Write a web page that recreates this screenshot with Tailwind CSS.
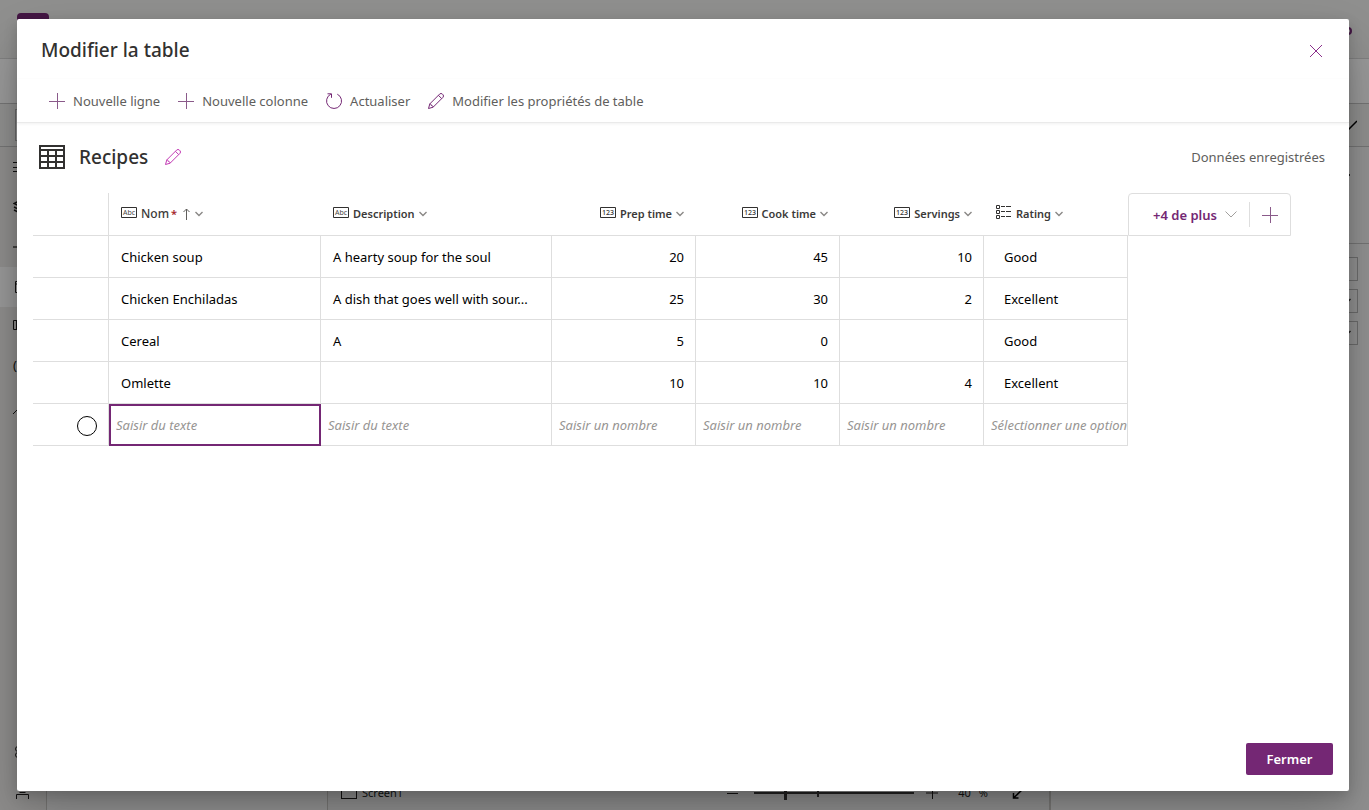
<!DOCTYPE html>
<html lang="fr">
<head>
<meta charset="utf-8">
<meta name="viewport" content="width=device-width, initial-scale=1">
<title>Modifier la table</title>
<script src="https://cdn.jsdelivr.net/npm/@tailwindcss/browser@4"></script>
</head>
<body class="relative h-screen overflow-hidden bg-white font-['Segoe_UI','Noto_Sans','Open_Sans',sans-serif] text-[13px] leading-5 text-[#323130]">

<svg class="hidden" aria-hidden="true">
  <symbol id="plus" viewBox="0 0 16 16"><path d="M8.5 0v16M0 8.5h16" fill="none" stroke="currentColor"/></symbol>
  <symbol id="chev" viewBox="0 0 8 6"><path d="M.5 1l3.5 3.5L7.500 1" fill="none" stroke="currentColor" stroke-width="1.400"/></symbol>
  <symbol id="pencil" viewBox="0 0 16 16"><path d="M.5 15.500l1.300-4.600L11.600 1.100a2 2 0 0 1 2.800 0l.5.500a2 2 0 0 1 0 2.800L5.100 14.200zM10.400 2.300l3.300 3.300M1.800 10.900c1 0 1.500.5 1.500 1.600 1.200 0 1.800.6 1.800 1.700" fill="none" stroke="currentColor"/></symbol>
  <symbol id="abc" viewBox="0 0 16 11"><path d="M.5.5h15v10H.5z" fill="none" stroke="#323130"/><text x="8" y="8" font-size="7" font-weight="400" text-anchor="middle" fill="#484644">Abc</text></symbol>
  <symbol id="num" viewBox="0 0 16 11"><path d="M.5.5h15v10H.5z" fill="none" stroke="#323130"/><text x="8" y="8" font-size="7" font-weight="500" text-anchor="middle" fill="#323130">123</text></symbol>
</svg>

<!-- App studio behind the dialog -->
<div class="absolute inset-0 flex flex-col" aria-hidden="true">
  <div class="flex h-[59px] shrink-0 justify-between border-b border-[#d8d8d8] bg-[#f0f0ef] pl-[17px] pr-[17px] pt-[13px]">
    <span class="h-8 w-8 rounded-sm bg-[#742774]"></span>
    <span class="mt-3.5 h-2 w-2 rounded-full border-2 border-[#742774]"></span>
  </div>
  <div class="h-[45px] shrink-0 border-b border-[#c4c4c4] bg-white"></div>
  <div class="flex h-[43px] shrink-0 items-center justify-between border-b border-[#c4c4c4] bg-[#f0f0ef] pl-[15px] pr-3">
    <span class="h-8 w-40 border border-[#b5b5b5] bg-[#f7f7f7]"></span>
    <svg class="h-2.5 w-4" viewBox="0 0 16 10"><path d="M0 1l8 8 8-8" fill="none" stroke="#000" stroke-width="1.500"/></svg>
  </div>
  <div class="flex min-h-0 grow">
    <div class="flex w-[47px] shrink-0 flex-col justify-between border-r border-[#c8c6c4] bg-[#eeedeb] text-[#201f1e]">
      <div>
        <div class="flex h-10 items-center pl-[13px]"><svg class="h-4 w-4" viewBox="0 0 16 16"><path d="M0 3.500h16M0 8.500h16M0 12.500h16" stroke="currentColor"/></svg></div>
        <div class="flex h-10 items-center pl-[13px]"><svg class="h-4 w-4" viewBox="0 0 16 16"><path d="M8 1L1 4.500 8 8l7-3.500zM1 8l7 3.500L15 8M1 11l7 3.500 7-3.500" fill="none" stroke="currentColor" stroke-width="1.500"/></svg></div>
        <div class="flex h-10 items-center pl-[13px]"><svg class="h-4 w-4" viewBox="0 0 16 16"><path d="M8 0v16M0 8h16" stroke="currentColor" stroke-width="2" opacity=".6"/></svg></div>
        <div class="flex h-10 items-center bg-white pl-[15px]"><svg class="h-4 w-3" viewBox="0 0 12 16"><path d="M.5 2.500h11v11H.5zM.5 5h11" fill="none" stroke="currentColor"/></svg></div>
        <div class="flex h-9 items-center pl-[13px]"><svg class="h-4 w-4" viewBox="0 0 16 16"><path d="M.5 3.500h15v9H.5zM3.500 3.500v9" fill="none" stroke="currentColor"/></svg></div>
        <div class="flex h-11 items-center pl-[13px]">(x)</div>
        <div class="flex h-12 items-center pl-[13px]"><svg class="h-4 w-4" viewBox="0 0 16 16"><path d="M0 11l7-7 7 7" fill="none" stroke="currentColor"/></svg></div>
      </div>
      <div>
        <div class="flex h-10 items-center pl-[15px]"><svg class="h-3 w-3" viewBox="0 0 12 12"><circle cx="3" cy="3" r="2.500" fill="none" stroke="currentColor"/><circle cx="3" cy="9" r="2.500" fill="none" stroke="currentColor"/></svg></div>
        <div class="flex h-[38px] items-center pl-4"><svg class="h-4 w-[13px]" viewBox="0 0 13 16"><path d="M.5 16v-4.500h12V16M3.500 9.500h6M2 7.500h9" fill="none" stroke="currentColor"/></svg></div>
      </div>
    </div>
    <div class="w-[281px] shrink-0 border-r border-[#c8c6c4] bg-[#f3f3f3]"></div>
    <div class="flex grow items-end justify-between bg-[#eeeeee] pb-[7px] pl-[13px] pr-[25px] text-[11px] text-[#201f1e]">
      <div class="flex items-center gap-[5px]"><span class="h-3 w-4 border border-[#201f1e]"></span>Screen1</div>
      <div class="flex items-center">
        <span class="h-px w-[11px] bg-[#201f1e]"></span>
        <span class="ml-4 flex h-[13px] w-40 items-center bg-[linear-gradient(#3b3a39,#3b3a39)] bg-[length:100%_2px] bg-center bg-no-repeat"><span class="ml-[30px] h-[13px] w-[3px] bg-[#3b3a39]"></span><span class="ml-[30px] h-2 w-[2px] bg-[#3b3a39]"></span></span>
        <svg class="ml-3 h-3 w-3" viewBox="0 0 12 12"><path d="M0 6h12M6.500 0v12" stroke="currentColor"/></svg>
        <span class="ml-[20px]">40</span><span class="ml-2">%</span>
        <svg class="ml-6 h-3 w-3" viewBox="0 0 12 12"><path d="M12 1L1.500 11M1.500 6v5h5" fill="none" stroke="#000" stroke-width="1.500"/></svg>
      </div>
    </div>
    <div class="flex w-80 shrink-0 flex-col items-end border-l-2 border-[#c8c6c4] bg-[#f3f3f3]">
      <div class="flex h-[97px] w-full items-center justify-end border-b border-[#c4c4c4] pb-10 pr-[19px]"><span class="h-0.5 w-2 bg-[#323130]"></span></div>
      <div class="mt-[13px] flex w-60 flex-col gap-2 pr-[11px]">
        <span class="h-6 border border-[#b5b5b5]"></span>
        <span class="flex h-6 items-center justify-end border border-[#b5b5b5] pr-1"><svg class="h-1.5 w-3" viewBox="0 0 8 6"><use href="#chev"/></svg></span>
        <span class="flex h-6 items-center justify-end border border-[#b5b5b5] pr-1"><svg class="h-1.5 w-3" viewBox="0 0 8 6"><use href="#chev"/></svg></span>
      </div>
    </div>
  </div>
</div>

<!-- Dialog -->
<div class="absolute inset-0 flex bg-black/40 py-[19px] pl-[17px] pr-5">
  <section role="dialog" aria-modal="true" aria-labelledby="title" class="flex min-w-0 grow flex-col rounded-[2px] bg-white shadow-[0_25px_57px_rgba(0,0,0,0.22),0_5px_14px_rgba(0,0,0,0.18)]">
    <header class="flex h-[60px] items-center justify-between pl-6 pr-[25px]">
      <h1 id="title" class="pt-0.5 text-[19px] font-medium leading-6">Modifier la table</h1>
      <button type="button" aria-label="Fermer la boîte de dialogue" class="mt-1 p-0.5 text-[#8a2f8a]"><svg class="h-3 w-3" viewBox="0 0 12 12"><path d="M0 0l12 12M12 0L0 12" stroke="currentColor"/></svg></button>
    </header>
    <div role="toolbar" aria-label="Commandes" class="flex h-11 shrink-0 items-center gap-[18px] border-b border-[#eaeaea] pl-8 text-[#605e5c] shadow-[0_1px_3px_rgba(0,0,0,0.06)]">
      <button type="button" class="flex items-center gap-2"><svg class="h-4 w-4 text-[#8a5a8a]"><use href="#plus"/></svg>Nouvelle ligne</button>
      <button type="button" class="flex items-center gap-2"><svg class="h-4 w-4 text-[#8a5a8a]"><use href="#plus"/></svg>Nouvelle colonne</button>
      <button type="button" class="flex items-center gap-2"><svg class="h-4 w-4 text-[#742774]" viewBox="0 0 16 16"><path d="M11.300 1.200A7.500 7.500 0 1 1 4.800 1.200M1.500.8h4v4" fill="none" stroke="currentColor"/></svg>Actualiser</button>
      <button type="button" class="flex items-center gap-2"><svg class="h-4 w-4 text-[#742774]"><use href="#pencil"/></svg>Modifier les propriétés de table</button>
    </div>

    <div class="flex items-center justify-between pb-[18px] pl-[22px] pr-6 pt-4">
      <div class="flex items-center">
        <svg class="h-6 w-[26px]" viewBox="0 0 26 24"><path d="M1 1h24v22H1zM1 5h24M1 11h24M1 17h24M9 5v18M17 5v18" fill="none" stroke="#323130" stroke-width="2"/></svg>
        <h2 class="ml-[14px] text-[19px] font-medium leading-9">Recipes</h2>
        <button type="button" aria-label="Renommer" class="ml-[17px] text-[#c239b3]"><svg class="h-4 w-4"><use href="#pencil"/></svg></button>
      </div>
      <p class="text-[#605e5c]">Données enregistrées</p>
    </div>

    <div class="flex grow items-start px-4">
      <table class="w-[1095px] table-fixed border-separate border-spacing-0 text-black [&_td]:h-[42px] [&_td]:border-b [&_td]:border-r [&_td]:border-[#dedede] [&_th]:h-[43px] [&_th]:border-b [&_th]:border-[#dedede]">
        <colgroup><col class="w-[76px]"><col class="w-[212px]"><col class="w-[231px]"><col class="w-[144px]"><col class="w-[144px]"><col class="w-[144px]"><col class="w-[144px]"></colgroup>
        <thead class="text-[11px] text-[#3b3a39] [&_th]:font-semibold">
          <tr>
            <th class="border-r"></th>
            <th class="px-3"><button type="button" class="flex items-center"><svg class="mb-1 h-[11px] w-4"><use href="#abc"/></svg><span class="ml-1 text-[12px] font-medium">Nom</span><span class="ml-0.5 text-[#a4262c]">*</span><svg class="ml-1.5 h-3 w-[7px] text-[#605e5c]" viewBox="0 0 7 12"><path d="M3.500 12V1M.5 4l3-3 3 3" fill="none" stroke="currentColor"/></svg><svg class="ml-[5px] h-1.5 w-2 text-[#8a8886]"><use href="#chev"/></svg></button></th>
            <th class="px-3"><button type="button" class="flex items-center gap-1"><svg class="mb-1 h-[11px] w-4"><use href="#abc"/></svg>Description<svg class="h-1.5 w-2 text-[#8a8886]"><use href="#chev"/></svg></button></th>
            <th class="px-3"><button type="button" class="ml-auto flex items-center gap-1"><svg class="mb-1 h-[11px] w-4"><use href="#num"/></svg>Prep time<svg class="h-1.5 w-2 text-[#8a8886]"><use href="#chev"/></svg></button></th>
            <th class="px-3"><button type="button" class="ml-auto flex items-center gap-1"><svg class="mb-1 h-[11px] w-4"><use href="#num"/></svg>Cook time<svg class="h-1.5 w-2 text-[#8a8886]"><use href="#chev"/></svg></button></th>
            <th class="px-3"><button type="button" class="ml-auto flex items-center gap-1"><svg class="mb-1 h-[11px] w-4"><use href="#num"/></svg>Servings<svg class="h-1.5 w-2 text-[#8a8886]"><use href="#chev"/></svg></button></th>
            <th class="px-3"><button type="button" class="flex items-center gap-1"><svg class="mb-1 h-[14px] w-4" viewBox="0 0 16 14"><path d="M.5.5h3v3h-3zM.5 5.500h3v3h-3zM.5 10.500h3v3h-3zM5 1.500h4M10 1.500h5M5 6.500h4M10 6.500h5M5 11.500h4M10 11.500h5" fill="none" stroke="#323130"/></svg>Rating<svg class="h-1.5 w-2 text-[#8a8886]"><use href="#chev"/></svg></button></th>
          </tr>
        </thead>
        <tbody>
          <tr><td></td><td class="px-3">Chicken soup</td><td class="px-3">A hearty soup for the soul</td><td class="px-[11px] text-right">20</td><td class="px-[11px] text-right">45</td><td class="px-[11px] text-right">10</td><td class="px-5">Good</td></tr>
          <tr><td></td><td class="px-3">Chicken Enchiladas</td><td class="truncate px-3">A dish that goes well with sour...</td><td class="px-[11px] text-right">25</td><td class="px-[11px] text-right">30</td><td class="px-[11px] text-right">2</td><td class="px-5">Excellent</td></tr>
          <tr><td></td><td class="px-3">Cereal</td><td class="px-3">A</td><td class="px-[11px] text-right">5</td><td class="px-[11px] text-right">0</td><td></td><td class="px-5">Good</td></tr>
          <tr><td></td><td class="px-3">Omlette</td><td></td><td class="px-[11px] text-right">10</td><td class="px-[11px] text-right">10</td><td class="px-[11px] text-right">4</td><td class="px-5">Excellent</td></tr>
          <tr class="[&_input]:block [&_input]:w-full [&_input]:pl-[7px] [&_input]:italic [&_input]:outline-none [&_input]:placeholder:text-[#979593]">
            <td><input type="radio" name="row" aria-label="Sélectionner la ligne" class="ml-auto mr-[11px] mt-0.5 h-5 !w-5 appearance-none rounded-full border border-black !pl-0"></td>
            <td class="!border-0"><input type="text" aria-label="Nom" placeholder="Saisir du texte" class="h-[42px] border-2 border-[#742774] !pl-[5px]"></td>
            <td><input type="text" aria-label="Description" placeholder="Saisir du texte" class="h-10"></td>
            <td><input type="text" aria-label="Prep time" placeholder="Saisir un nombre" class="h-10"></td>
            <td><input type="text" aria-label="Cook time" placeholder="Saisir un nombre" class="h-10"></td>
            <td><input type="text" aria-label="Servings" placeholder="Saisir un nombre" class="h-10"></td>
            <td><input type="text" aria-label="Rating" placeholder="Sélectionner une option" class="h-10"></td>
          </tr>
        </tbody>
      </table>
      <div class="flex h-[43px] items-center rounded-t-[4px] border border-[#dedede]">
        <button type="button" class="flex h-[25px] w-[121px] items-center justify-end gap-2 border-r border-[#dedede] pr-3 font-semibold text-[#742774]">+4 de plus<svg class="h-[7px] w-3 text-[#a19f9d]" viewBox="0 0 12 7"><path d="M.5.5L6 6 11.500.5" fill="none" stroke="currentColor"/></svg></button>
        <button type="button" aria-label="Nouvelle colonne" class="flex w-10 justify-center"><svg class="h-4 w-4 text-[#8a5a8a]"><use href="#plus"/></svg></button>
      </div>
    </div>

    <footer class="flex justify-end p-4">
      <button type="button" class="h-8 w-[87px] rounded-[2px] bg-[#742774] font-semibold text-white">Fermer</button>
    </footer>
  </section>
</div>
</body>
</html>
